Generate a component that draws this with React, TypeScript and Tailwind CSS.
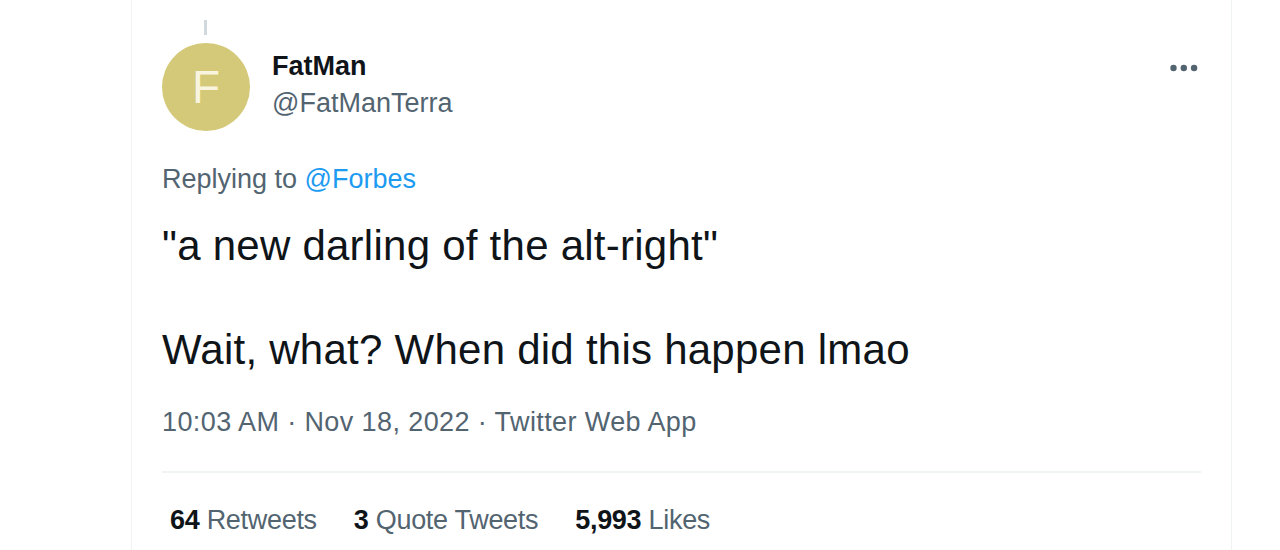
interface Stat {
  count: string;
  label: string;
}

export default function App() {
  const stats: Stat[] = [
    { count: '64', label: 'Retweets' },
    { count: '3', label: 'Quote Tweets' },
    { count: '5,993', label: 'Likes' },
  ];

  return (
    <div
      className="h-[550px] w-[1280px] overflow-hidden bg-white"
      style={{ fontFamily: '"Liberation Sans", Arial, sans-serif' }}
    >
      <div className="ml-[131px] h-full w-[1101px] border-x border-[#eff3f4] px-[30px]">
        {/* Thread line */}
        <div className="pt-[20px]">
          <div className="ml-[42px] h-[15px] w-[3px] bg-[#cfd9de]" />
        </div>

        {/* Header */}
        <div className="mt-[8px] flex items-start">
          <div className="flex h-[88px] w-[88px] shrink-0 items-center justify-center rounded-full bg-[#d3c978] text-[46px] text-[#f8f4de]">
            F
          </div>
          <div className="ml-[22px] flex-1 pt-[5px]">
            <div className="text-[27px] font-bold leading-[37px] text-[#0f1419]">
              FatMan
            </div>
            <div className="text-[27px] leading-[37px] text-[#536471]">
              @FatManTerra
            </div>
          </div>
          <svg
            width="28"
            height="8"
            viewBox="0 0 28 8"
            className="mr-[3px] mt-[21px]"
            fill="#536471"
          >
            <circle cx="3.5" cy="4" r="3.2" />
            <circle cx="13.8" cy="4" r="3.2" />
            <circle cx="24.1" cy="4" r="3.2" />
          </svg>
        </div>

        {/* Replying to */}
        <div className="mt-[30px] text-[27px] leading-[37px] text-[#536471]">
          Replying to <span className="text-[#1d9bf0]">@Forbes</span>
        </div>

        {/* Body */}
        <div className="mt-[22px] text-[42px] leading-[52px] tracking-[0.25px] text-[#0f1419]">
          <p>"a new darling of the alt-right"</p>
          <p>&nbsp;</p>
          <p>Wait, what? When did this happen lmao</p>
        </div>

        {/* Timestamp */}
        <div className="mt-[28px] text-[27px] leading-[37px] tracking-[0.4px] text-[#536471]">
          10:03 AM · Nov 18, 2022 · Twitter Web App
        </div>

        <div className="mt-[30px] h-[2px] bg-[#eff3f4]" />

        {/* Stats */}
        <div className="mt-[29px] flex gap-[37px] pl-[8px] text-[27px] leading-[37px] tracking-[-0.3px]">
          {stats.map((stat, i) => (
            <span key={i} className="text-[#536471]">
              <span className="font-bold text-[#0f1419]">{stat.count}</span>{' '}
              {stat.label}
            </span>
          ))}
        </div>
      </div>
    </div>
  );
}
